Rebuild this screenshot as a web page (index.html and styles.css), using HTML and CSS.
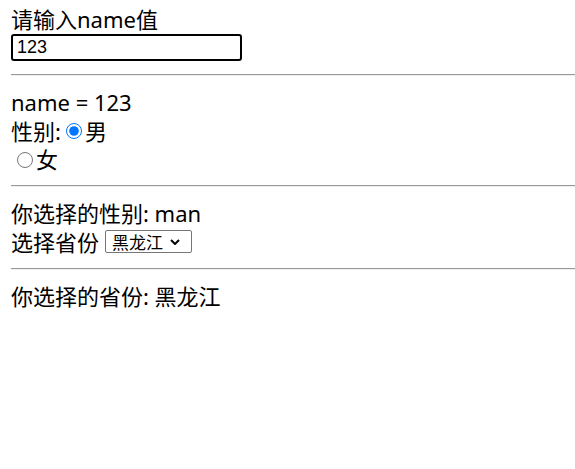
FILE: index.html
```html
<!DOCTYPE html>
<html lang="zh">
<head>
<meta charset="utf-8">
<title>form</title>
<link rel="stylesheet" href="styles.css">
</head>
<body>
<div class="page">
  <div class="row first">请输入name值</div>
  <div class="field-row"><input class="text-input" type="text" value="123"></div>
  <div class="rule"></div>
  <div class="row">name = 123</div>
  <div class="row tall">性别: <input class="radio" type="radio" name="sex" checked>男</div>
  <div class="row"><input class="radio solo" type="radio" name="sex">女</div>
  <div class="rule"></div>
  <div class="row">你选择的性别: man</div>
  <div class="row tall">选择省份 <span class="select">黑龙江<svg class="chev" viewBox="0 0 10 6" width="10" height="6"><path d="M1 1 L5 5 L9 1" fill="none" stroke="#000" stroke-width="2"/></svg></span></div>
  <div class="rule"></div>
  <div class="row">你选择的省份: 黑龙江</div>
</div>
</body>
</html>
```
FILE: styles.css
```css
html, body {
  margin: 0;
  padding: 0;
  background: #fff;
}
.page {
  display: flex;
  flex-direction: column;
  padding: 5px 0 0 11px;
  font-family: "Noto Sans", "Noto Sans CJK SC", sans-serif;
  font-size: 22px;
  color: #000;
}
.row {
  height: 28px;
  line-height: 28px;
  white-space: nowrap;
  display: flex;
  align-items: center;
}
.row.tall {
  height: 29px;
}
.field-row {
  display: flex;
  margin: 1px 0 1px 0;
}
.text-input {
  box-sizing: border-box;
  width: 231px;
  height: 27px;
  margin: 0;
  border: 2px solid #000;
  border-radius: 3px;
  padding: 0 4px;
  font-family: "Liberation Sans", Arial, sans-serif;
  font-size: 18px;
  color: #000;
  outline: none;
}
.rule {
  margin: 12px 0 12px 0;
  height: 1px;
  border-top: 1px solid #9a9a9a;
  background: #eeeeee;
}
.radio {
  width: 16px;
  height: 16px;
  margin: 1px 3px 0 5px;
  accent-color: #0075ff;
}
.radio.solo {
  margin-left: 6px;
}
.select {
  box-sizing: border-box;
  display: inline-flex;
  align-items: center;
  height: 23px;
  width: 87px;
  margin-left: 6px;
  padding: 0 0 0 6px;
  border: 1px solid #767676;
  border-radius: 2px;
  font-family: "Noto Sans CJK SC", sans-serif;
  font-size: 17px;
  line-height: 21px;
}
.chev {
  margin-left: 7px;
}
```
